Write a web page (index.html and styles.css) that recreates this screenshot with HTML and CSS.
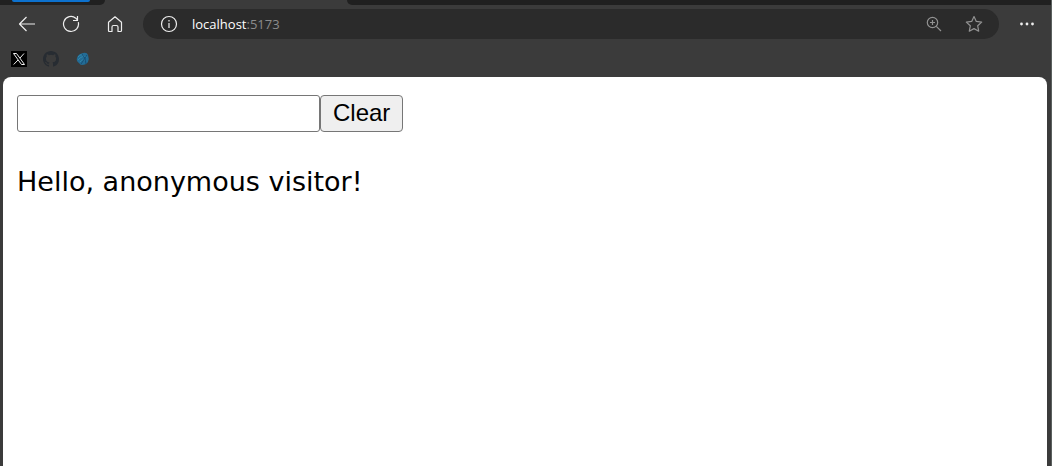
FILE: index.html
```html
<!DOCTYPE html>
<html lang="en">
<head>
<meta charset="utf-8">
<title>localhost</title>
<link rel="stylesheet" href="styles.css">
</head>
<body>
<div class="browser">
  <div class="tabs">
    <div class="tab-group"><span class="tab-accent"></span></div>
    <div class="tab-active"></div>
    <div class="tab-rest"></div>
  </div>
  <nav class="toolbar" aria-label="Browser toolbar">
    <button class="tool" aria-label="Back"><svg width="18" height="18" viewBox="0 0 18 18"><path d="M8.500 2L1.500 9l7 7M1.500 9H17"/></svg></button>
    <button class="tool" aria-label="Refresh"><svg width="18" height="18" viewBox="0 0 18 18"><path d="M16.300 7.200A7.500 7.500 0 1 1 13.800 3.200L15.500 5M15.500 1v4.500H11"/></svg></button>
    <button class="tool" aria-label="Home"><svg width="18" height="18" viewBox="0 0 18 18"><path d="M2.500 7.200L9 1.800l6.500 5.400v8.300q0 1-1 1h-2.500v-4.500q0-1.500-1.500-1.500h-3Q6 10.500 6 12v4.500H3.500q-1 0-1-1z"/></svg></button>
    <div class="address">
      <button class="mini" aria-label="Site information"><svg width="18" height="18" viewBox="0 0 18 18"><circle cx="9" cy="9" r="7.500"/><path d="M9 8v5M9 5v1.500"/></svg></button>
      <span class="url">localhost<span class="port">:5173</span></span>
      <button class="mini dim" aria-label="Zoom"><svg width="18" height="18" viewBox="0 0 18 18"><circle cx="7.500" cy="7.500" r="5.200"/><path d="M11.300 11.300L16 16M5 7.500h5M7.500 5v5"/></svg></button>
      <button class="mini dim star" aria-label="Add to favorites"><svg width="18" height="18" viewBox="0 0 18 18"><path d="M9 1.500l2.300 4.900 5.400.7-4 3.700 1 5.400L9 13.600l-4.700 2.600 1-5.400-4-3.700 5.400-.7z"/></svg></button>
    </div>
    <button class="tool more" aria-label="Settings and more"><svg width="18" height="18" viewBox="0 0 18 18"><circle class="dot" cx="3.500" cy="9" r="1.400"/><circle class="dot" cx="9" cy="9" r="1.400"/><circle class="dot" cx="14.500" cy="9" r="1.400"/></svg></button>
  </nav>
  <div class="bookmarks">
    <a href="#" aria-label="X"><svg width="16" height="16" viewBox="0 0 16 16"><rect width="16" height="16" fill="#000"/><path d="M2.500 2.500h3l8 11h-3zM13 2.500L9 7M7 9l-4.300 4.500" fill="none" stroke="#eee"/></svg></a>
    <a href="#" aria-label="GitHub"><svg width="16" height="16" viewBox="0 0 16 16"><path fill="#272c32" d="M8 0C3.580 0 0 3.580 0 8c0 3.540 2.290 6.530 5.470 7.590.4.070.55-.17.55-.38v-1.490c-2.010.37-2.530-.49-2.690-.94-.09-.23-.48-.94-.82-1.130-.28-.15-.68-.52-.01-.53.63-.01 1.080.58 1.230.82.72 1.210 1.870.87 2.330.66.070-.52.280-.87.510-1.070-1.780-.2-3.640-.89-3.640-3.950 0-.87.310-1.590.820-2.150-.08-.2-.36-1.020.080-2.120 0 0 .67-.21 2.200.82a7.600 7.600 0 0 1 4 0c1.530-1.040 2.200-.82 2.200-.82.44 1.100.16 1.920.080 2.120.510.560.820 1.270.820 2.150 0 3.070-1.870 3.750-3.650 3.950.29.250.54.730.54 1.480v2.200c0 .21.15.46.55.38A8 8 0 0 0 16 8c0-4.420-3.580-8-8-8"/></svg></a>
    <a href="#" aria-label="Bookmark"><svg width="16" height="16" viewBox="0 0 16 16"><path fill="#236c95" d="M8 2q4-1 5 2 1.500 4 0 7-2 3-6 3-2 0-3-2-3-2-2-5Q3 3 8 2z"/><g fill="none" stroke="#3187ab"><path d="M3 6q3-4 6-1M3 9q4-5 9-3M5 11q3-4 6-1"/></g><path d="M7 3q4 4 4 10M12 4L6 13" fill="none" stroke="#174f77"/></svg></a>
  </div>
  <main class="page">
    <form class="controls">
      <input class="name" type="text" aria-label="Name">
      <button class="clear" type="button">Clear</button>
    </form>
    <p class="greeting">Hello, anonymous visitor!</p>
  </main>
</div>
</body>
</html>
```
FILE: styles.css
```css
* { box-sizing: border-box; }
body { margin: 0; background: #3b3b3b; }
button { font: inherit; }
.browser {
  display: flex;
  flex-direction: column;
  min-height: 100vh;
  border-right: 1px solid #5b615f;
}
.tabs { display: flex; height: 5px; background: #3b3b3b; }
.tab-group {
  flex: 0 0 105px;
  padding-left: 12px;
  background: #202020;
  border-bottom-right-radius: 5px;
}
.tab-accent {
  display: block;
  width: 78px;
  height: 2px;
  background: #0d72cf;
  border-radius: 0 0 4px 4px;
}
.tab-active { flex: 0 0 242px; }
.tab-rest { flex: 1; background: #202020; border-bottom-left-radius: 5px; }
.toolbar {
  display: flex;
  align-items: center;
  height: 38px;
  padding: 0 5px;
}
.tool, .mini {
  display: flex;
  align-items: center;
  justify-content: center;
  flex: none;
  padding: 0;
  border: 0;
  background: none;
  color: #eee;
}
.tool { width: 44px; height: 30px; }
.tool svg, .mini svg { fill: none; stroke: currentColor; stroke-width: 1.2; stroke-linejoin: round; }
.tool .dot { fill: currentColor; stroke: none; }
.address {
  display: flex;
  align-items: center;
  flex: 1;
  height: 30px;
  margin-left: 6px;
  padding: 0 16px 0 17px;
  border-radius: 15px;
  background: #2b2b2b;
}
.mini { width: 18px; height: 18px; }
.dim { color: #929292; }
.star { margin-left: 22px; }
.url {
  flex: 1;
  margin-left: 14px;
  font: 13px/20px "Open Sans", "Noto Sans", sans-serif;
  color: #fff;
}
.port { color: #8c8c8c; }
.more { width: 38px; margin-left: 9px; }
.bookmarks {
  display: flex;
  align-items: center;
  gap: 16px;
  height: 34px;
  padding: 0 11px 2px;
}
.bookmarks a { display: flex; }
.page {
  flex: 1;
  margin: 0 4px 0 3px;
  padding: 18px 14px;
  background: #fff;
  border-radius: 8px 8px 0 0;
}
.controls { display: flex; }
.name {
  width: 303px;
  height: 37px;
  padding: 2px 4px;
  border: 1px solid #767676;
  border-radius: 3px;
  font: 24px/28px "Liberation Sans", Arial, sans-serif;
}
.clear {
  height: 37px;
  padding: 0 12px 2px;
  border: 1px solid #767676;
  border-radius: 4px;
  background: #efefef;
  color: #000;
  font: 24px/32px "Liberation Sans", Arial, sans-serif;
}
.greeting {
  margin: 32px 0 0;
  font: 27px/36px "DejaVu Sans", Verdana, sans-serif;
  color: #000;
}
```
